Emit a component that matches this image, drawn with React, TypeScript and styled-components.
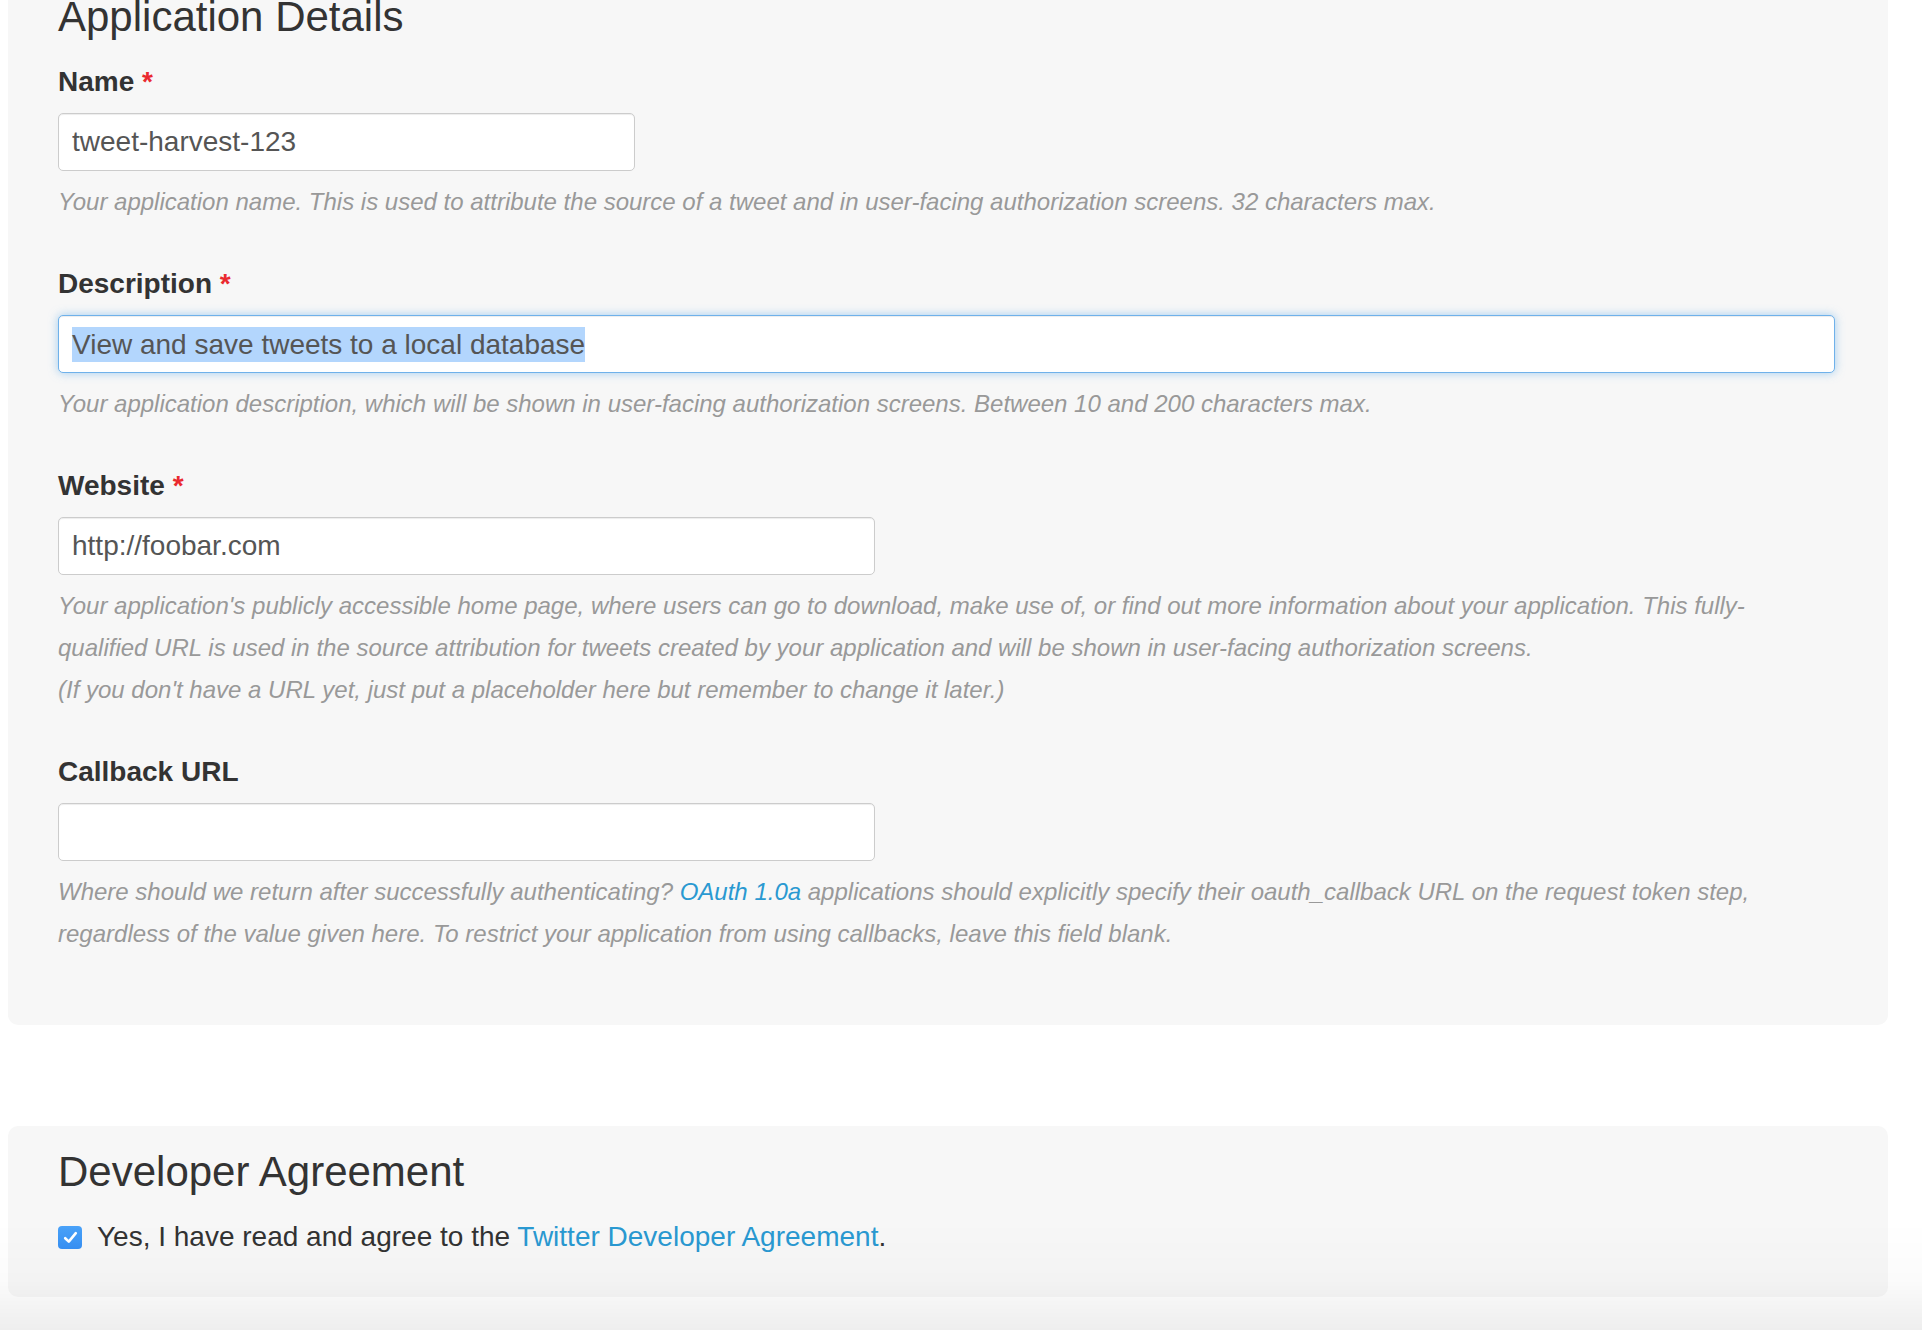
import React from "react";
import styled, { createGlobalStyle } from "styled-components";

const GlobalStyle = createGlobalStyle`
  html, body {
    margin: 0;
    padding: 0;
    background: #ffffff;
  }
  body {
    font-family: "Liberation Sans", Arial, Helvetica, sans-serif;
    color: #333333;
    overflow: hidden;
  }
`;

const Page = styled.main`
  display: flex;
  flex-direction: column;
  gap: 101px;
  margin-top: -29px;
  padding: 0 34px 33px 8px;
`;

const Panel = styled.section<{ $bottom: number }>`
  background: #f7f7f7;
  border-radius: 10px;
  padding: 23px 53px ${(p) => p.$bottom}px 50px;
`;

const Heading = styled.h2`
  margin: 0 0 25px;
  font-size: 42px;
  line-height: 46px;
  font-weight: 400;
  color: #333333;
`;

const Field = styled.div`
  margin-bottom: 44px;
  &:last-child {
    margin-bottom: 0;
  }
`;

const Label = styled.label`
  display: block;
  margin-bottom: 14px;
  font-size: 28px;
  line-height: 34px;
  font-weight: 700;
  color: #333333;
`;

const Required = styled.span`
  color: #ea2a2f;
`;

const TextInput = styled.input<{ $width?: number }>`
  display: block;
  box-sizing: border-box;
  width: ${(p) => (p.$width ? `${p.$width}px` : "100%")};
  height: 58px;
  padding: 0 13px;
  border: 1px solid #cccccc;
  border-radius: 5px;
  background: #ffffff;
  box-shadow: inset 0 1px 1px rgba(0, 0, 0, 0.075);
  font-family: "Liberation Sans", Arial, Helvetica, sans-serif;
  font-size: 28px;
  color: #555555;
  outline: none;
`;

const FocusedInput = styled.div`
  display: flex;
  align-items: center;
  box-sizing: border-box;
  width: 100%;
  height: 58px;
  padding: 0 13px;
  border: 1px solid #6fb1ea;
  border-radius: 5px;
  background: #ffffff;
  box-shadow: inset 0 1px 1px rgba(0, 0, 0, 0.075),
    0 0 10px rgba(102, 175, 233, 0.6);
  font-size: 28px;
  color: #555555;
  white-space: nowrap;
`;

const Selected = styled.span`
  background: #b3d6fd;
  line-height: 35px;
`;

const Help = styled.p`
  margin: 10px 0 0;
  max-width: 1740px;
  font-size: 24px;
  line-height: 42px;
  font-style: italic;
  color: #999999;
`;

const Link = styled.a`
  color: #2a99d1;
  text-decoration: none;
`;

const AgreeRow = styled.label`
  display: flex;
  align-items: center;
  gap: 15px;
  font-size: 28px;
  line-height: 34px;
  color: #333333;
`;

const CheckBox = styled.span`
  display: inline-flex;
  align-items: center;
  justify-content: center;
  width: 24px;
  height: 23px;
  border-radius: 4px;
  background: linear-gradient(#4aa2f9, #3790f3);
  flex: none;
`;

const BottomFade = styled.div`
  position: fixed;
  left: 0;
  right: 0;
  bottom: 0;
  height: 110px;
  pointer-events: none;
  background: linear-gradient(
    to bottom,
    rgba(0, 0, 0, 0) 0%,
    rgba(0, 0, 0, 0.015) 55%,
    rgba(0, 0, 0, 0.065) 100%
  );
`;

export default function App() {
  return (
    <>
      <GlobalStyle />
      <Page>
        <Panel $bottom={70}>
          <Heading>Application Details</Heading>

          <Field>
            <Label>
              Name <Required>*</Required>
            </Label>
            <TextInput $width={577} defaultValue="tweet-harvest-123" />
            <Help>
              Your application name. This is used to attribute the source of a
              tweet and in user-facing authorization screens. 32 characters
              max.
            </Help>
          </Field>

          <Field>
            <Label>
              Description <Required>*</Required>
            </Label>
            <FocusedInput role="textbox">
              <Selected>View and save tweets to a local database</Selected>
            </FocusedInput>
            <Help>
              Your application description, which will be shown in user-facing
              authorization screens. Between 10 and 200 characters max.
            </Help>
          </Field>

          <Field>
            <Label>
              Website <Required>*</Required>
            </Label>
            <TextInput $width={817} defaultValue="http://foobar.com" />
            <Help>
              Your application's publicly accessible home page, where users can
              go to download, make use of, or find out more information about
              your application. This fully-qualified URL is used in the source
              attribution for tweets created by your application and will be
              shown in user-facing authorization screens.
              <br />
              (If you don't have a URL yet, just put a placeholder here but
              remember to change it later.)
            </Help>
          </Field>

          <Field>
            <Label>Callback URL</Label>
            <TextInput $width={817} defaultValue="" />
            <Help>
              Where should we return after successfully authenticating?{" "}
              <Link href="#">OAuth 1.0a</Link> applications should explicitly
              specify their oauth_callback URL on the request token step,
              regardless of the value given here. To restrict your application
              from using callbacks, leave this field blank.
            </Help>
          </Field>
        </Panel>

        <Panel $bottom={43}>
          <Heading>Developer Agreement</Heading>
          <AgreeRow>
            <CheckBox>
              <svg width="15" height="13" viewBox="0 0 15 13" fill="none">
                <path
                  d="M2.2 7.2 L5.8 10.6 L12.8 2.2"
                  stroke="#ffffff"
                  strokeWidth="2.6"
                  strokeLinecap="round"
                  strokeLinejoin="round"
                />
              </svg>
            </CheckBox>
            <span>
              Yes, I have read and agree to the{" "}
              <Link href="#">Twitter Developer Agreement</Link>.
            </span>
          </AgreeRow>
        </Panel>
      </Page>
      <BottomFade />
    </>
  );
}
